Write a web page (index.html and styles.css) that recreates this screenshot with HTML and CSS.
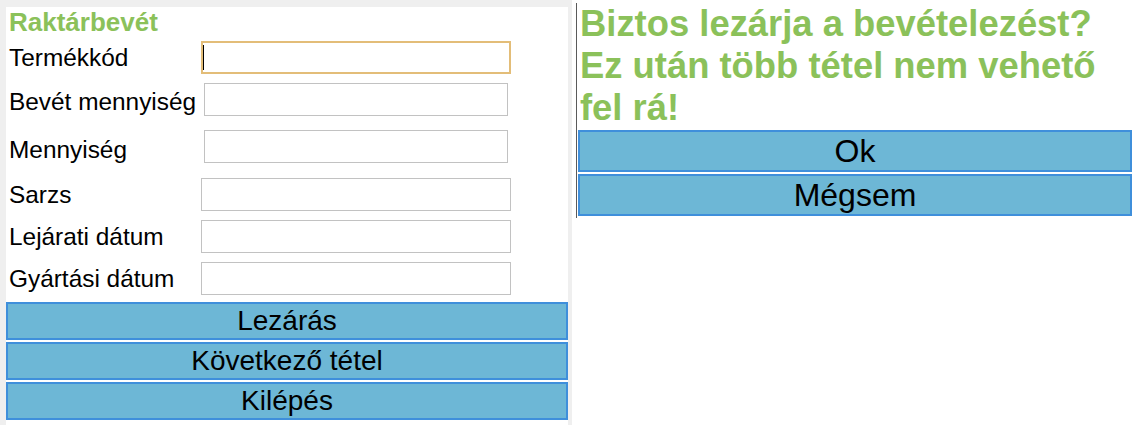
FILE: index.html
```html
<!DOCTYPE html>
<html lang="hu">
<head>
<meta charset="utf-8">
<title>Raktárbevét</title>
<link rel="stylesheet" href="styles.css">
</head>
<body>
<div class="page">
  <section class="left-frame">
    <div class="panel">
      <h2 class="title">Raktárbevét</h2>
      <div class="form">
        <label class="lbl">Termékkód</label>
        <div class="field field-focus"><input class="inp inp-focus" type="text"></div>
        <label class="lbl">Bevét mennyiség</label>
        <div class="field"><input class="inp inp-narrow" type="text"></div>
        <label class="lbl">Mennyiség</label>
        <div class="field"><input class="inp inp-narrow inp-narrow-b" type="text"></div>
        <label class="lbl">Sarzs</label>
        <div class="field"><input class="inp" type="text"></div>
        <label class="lbl">Lejárati dátum</label>
        <div class="field"><input class="inp" type="text"></div>
        <label class="lbl">Gyártási dátum</label>
        <div class="field"><input class="inp" type="text"></div>
      </div>
      <div class="actions">
        <button class="btn">Lezárás</button>
        <button class="btn">Következő tétel</button>
        <button class="btn">Kilépés</button>
      </div>
    </div>
  </section>
  <section class="dialog">
    <h1 class="question">Biztos lezárja a bevételezést? Ez után több tétel nem vehető fel rá!</h1>
    <div class="dialog-actions">
      <button class="btn btn-lg">Ok</button>
      <button class="btn btn-lg">Mégsem</button>
    </div>
  </section>
</div>
</body>
</html>
```
FILE: styles.css
```css
html, body {
  margin: 0;
  padding: 0;
  background: #ffffff;
  font-family: "Liberation Sans", Arial, sans-serif;
  color: #000;
}

.page {
  display: flex;
  align-items: flex-start;
  height: 425px;
  overflow: hidden;
}

.left-frame {
  width: 572px;
  height: 425px;
  box-sizing: border-box;
  flex: none;
  background: #efefef;
  padding: 7px 4px 0 6px;
}

.panel {
  background: #ffffff;
  height: 100%;
}

.title {
  margin: 0 0 4px 3px;
  padding-top: 1px;
  font-size: 26px;
  line-height: 29px;
  font-weight: 700;
  color: #8bc15a;
}

.form {
  display: grid;
  grid-template-columns: 192px 310px;
  row-gap: 9px;
  align-items: center;
  padding-left: 3px;
}

.lbl {
  font-size: 24.4px;
  line-height: 28px;
  white-space: nowrap;
}

.field {
  display: flex;
}

.inp {
  width: 310px;
  height: 33px;
  box-sizing: border-box;
  margin: 0;
  border: 1px solid #c2c2c2;
  background: #fff;
  font-family: inherit;
  font-size: 20px;
  padding: 0 4px;
  outline: none;
}

.inp-narrow {
  width: 304px;
  margin: 0 3px 5px;
}

.inp-narrow-b {
  margin-bottom: 6px;
}

.inp-focus {
  border: 2px solid #e3bd78;
}

.field-focus {
  position: relative;
}

.field-focus::after {
  content: "";
  position: absolute;
  left: 2px;
  top: 4px;
  width: 1px;
  height: 25px;
  background: #000;
}

.actions {
  display: flex;
  flex-direction: column;
  gap: 2px;
  margin-top: 7px;
}

.btn {
  display: block;
  width: 100%;
  height: 38px;
  box-sizing: border-box;
  margin: 0;
  padding: 0;
  border: 2px solid #3f8fdb;
  background: #6db7d6;
  color: #000;
  font-family: inherit;
  font-size: 28px;
  line-height: 32px;
  text-align: center;
}

.dialog {
  flex: 1;
  margin-left: 4px;
  margin-top: 3px;
  border-left: 1px solid #5a5a5a;
  padding-bottom: 2px;
}

.question {
  margin: 0 0 1px;
  padding-left: 3px;
  font-size: 36.4px;
  line-height: 42px;
  font-weight: 700;
  color: #8bc15a;
}

.dialog-actions {
  display: flex;
  flex-direction: column;
  gap: 2px;
  padding-left: 1px;
}

.btn-lg {
  height: 42px;
  font-size: 32px;
  line-height: 36px;
}
```
